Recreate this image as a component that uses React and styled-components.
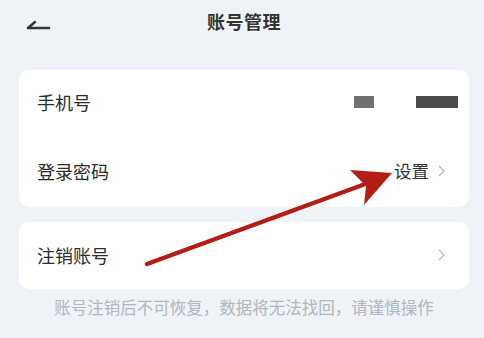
import styled, { createGlobalStyle } from "styled-components";

const Global = createGlobalStyle`
  html, body {
    margin: 0;
    padding: 0;
    background: #eff2f6;
  }
  body {
    font-family: "Noto Sans CJK SC", "Noto Sans", sans-serif;
  }
`;

const Page = styled.div`
  position: relative;
  width: 484px;
  height: 338px;
  overflow: hidden;
  background: #eff2f6;
  padding: 0 15px 0 19px;
  box-sizing: border-box;
`;

const Header = styled.div`
  position: relative;
  height: 44px;
  display: flex;
  align-items: center;
  justify-content: center;
  margin-bottom: 26px;
`;

const Back = styled.div`
  position: absolute;
  left: 6px;
  top: 13px;
  width: 26px;
  height: 16px;
`;

const Title = styled.div`
  font-size: 18px;
  font-weight: 600;
  color: #333;
  letter-spacing: 0.5px;
  margin-top: -2px;
`;

const Card = styled.div`
  background: #fff;
  border-radius: 10px;
  margin-bottom: ${(p) => p.$gap || 0}px;
`;

const Row = styled.div`
  height: ${(p) => p.$h || 68}px;
  display: flex;
  align-items: center;
  padding: 0 24px 2px 18px;
  box-sizing: border-box;
`;

const Label = styled.div`
  flex: 1;
  font-size: 18px;
  color: #2b2b2b;
`;

const Value = styled.div`
  font-size: 17.5px;
  color: #333;
  margin-right: 9px;
`;

const Chevron = () => (
  <svg width="7" height="12" viewBox="0 0 7 12">
    <path d="M1 1 L6 6 L1 11" fill="none" stroke="#b5b8be" strokeWidth="1.3" />
  </svg>
);

const Mask = styled.div`
  display: flex;
  align-items: center;
  gap: 42px;
  margin-right: -13px;
`;

const Block = styled.div`
  width: ${(p) => p.$w}px;
  height: 12px;
  background: ${(p) => p.$c};
`;

const Note = styled.div`
  text-align: center;
  font-size: 16.5px;
  color: #b3b6bc;
  margin-top: 6px;
`;

const Arrow = styled.svg`
  position: absolute;
  left: 0;
  top: 0;
  pointer-events: none;
`;

export default function App() {
  return (
    <>
      <Global />
      <Page>
        <Header>
          <Back>
            <svg width="26" height="16" viewBox="0 0 26 16">
              <path d="M3 12 H24" stroke="#333" strokeWidth="2.4" strokeLinecap="round" />
              <path d="M3 12 L10 6" stroke="#333" strokeWidth="2.4" strokeLinecap="round" />
            </svg>
          </Back>
          <Title>账号管理</Title>
        </Header>
        <Card $gap={15}>
          <Row $h={66}>
            <Label>手机号</Label>
            <Mask>
              <Block $w={20} $c="#707070" />
              <Block $w={42} $c="#4a4a4a" />
            </Mask>
          </Row>
          <Row $h={71}>
            <Label>登录密码</Label>
            <Value>设置</Value>
            <Chevron />
          </Row>
        </Card>
        <Card>
          <Row $h={67}>
            <Label>注销账号</Label>
            <Chevron />
          </Row>
        </Card>
        <Note>账号注销后不可恢复，数据将无法找回，请谨慎操作</Note>
        <Arrow width="484" height="338" viewBox="0 0 484 338">
          <path d="M147 264 L368 183" stroke="#b21e16" strokeWidth="4.5" strokeLinecap="round" />
          <path d="M392 173 L350 170 L366 186 L364 205 Z" fill="#b21e16" />
        </Arrow>
      </Page>
    </>
  );
}
